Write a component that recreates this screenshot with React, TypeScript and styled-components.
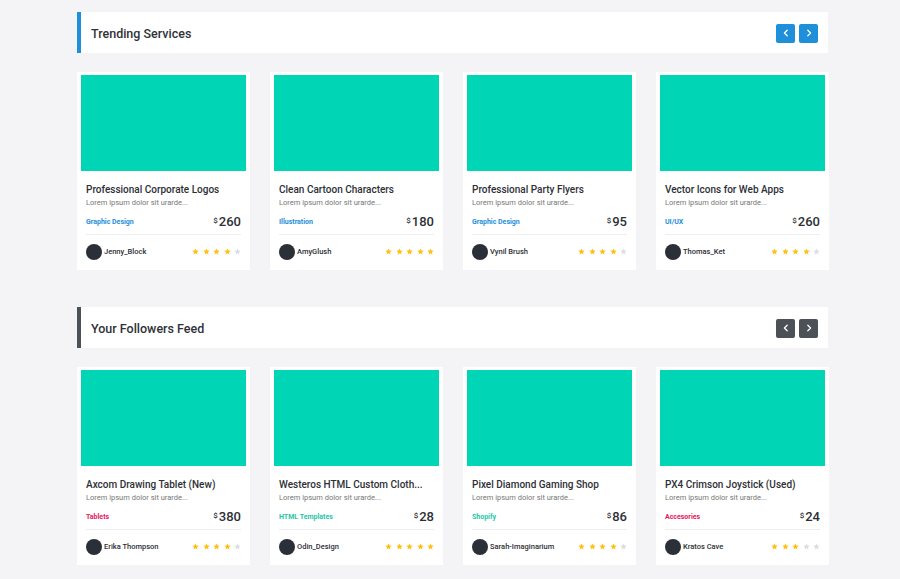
import * as React from "react";
import styled, { createGlobalStyle } from "styled-components";

const GlobalStyle = createGlobalStyle`
  html, body {
    margin: 0;
    padding: 0;
    background: #f4f3f6;
    font-family: Roboto, "Open Sans", "Liberation Sans", sans-serif;
    color: #3e3f5e;
  }
`;

const SPage = styled.div`
  width: 752px;
  margin-left: 77px;
  padding-top: 12px;
  display: flex;
  flex-direction: column;
`;

const SSection = styled.section`
  display: flex;
  flex-direction: column;
  gap: 19px;
  margin-bottom: 37px;
`;

interface IAccent {
  accent: string;
}

const SHeader = styled.div<IAccent>`
  height: 41px;
  background: #fff;
  border-left: 4px solid ${({ accent }) => accent};
  display: flex;
  align-items: center;
  justify-content: space-between;
  padding: 1px 10px 0 10px;
  box-sizing: border-box;
  width: 751px;
`;

const STitle = styled.h2`
  margin: 0;
  font-size: 12.5px;
  font-weight: 500;
  color: #2f3238;
`;

const SControls = styled.div`
  display: flex;
  gap: 4px;
`;

const SArrow = styled.button<IAccent>`
  width: 19px;
  height: 19px;
  border: none;
  border-radius: 2px;
  background: ${({ accent }) => accent};
  color: #fff;
  padding: 0;
  display: flex;
  align-items: center;
  justify-content: center;
  cursor: pointer;
`;

const SGrid = styled.div`
  display: grid;
  grid-template-columns: repeat(4, 173px);
  gap: 20px;
`;

const SCard = styled.div`
  background: #fff;
  padding: 3px 4px 0;
  box-sizing: border-box;
  height: 198px;
  display: flex;
  flex-direction: column;
`;

const SImage = styled.div`
  height: 96px;
  background: #00d5b5;
`;

const SBody = styled.div`
  padding: 13px 5px 0;
  display: flex;
  flex-direction: column;
`;

const SCardTitle = styled.div`
  font-size: 10px;
  font-weight: 500;
  color: #2d2f36;
  white-space: nowrap;
`;

const SDesc = styled.div`
  font-size: 7.5px;
  color: #777;
  margin-top: 3px;
`;

const SMeta = styled.div`
  display: flex;
  justify-content: space-between;
  align-items: center;
  margin-top: 7px;
  padding-bottom: 5px;
  border-bottom: 1px solid #eeeef2;
`;

const SCategory = styled.span<{ color: string }>`
  font-size: 7px;
  font-weight: 700;
  color: ${({ color }) => color};
`;

const SPrice = styled.span`
  font-size: 13px;
  font-weight: 500;
  color: #2d2f36;
  & sup {
    font-size: 8px;
    vertical-align: 3px;
    margin-right: 1px;
  }
`;

const SFooter = styled.div`
  display: flex;
  justify-content: space-between;
  align-items: center;
  height: 33px;
`;

const SUser = styled.div`
  display: flex;
  align-items: center;
  gap: 2px;
  font-size: 7.5px;
  font-weight: 500;
  color: #2d2f36;
`;

const SAvatar = styled.div`
  width: 16px;
  height: 16px;
  border-radius: 50%;
  background: #2b3038;
`;

const SStars = styled.div`
  display: flex;
  gap: 3.5px;
`;

const Star = ({ on }: { on: boolean }) => (
  <svg width="7" height="7" viewBox="0 0 24 24">
    <path
      d="M12 1.5l3.2 7 7.6.8-5.7 5.1 1.6 7.6L12 18.1l-6.7 3.9 1.6-7.6L1.2 9.3l7.6-.8z"
      fill={on ? "#ffc012" : "#dcdce4"}
    />
  </svg>
);

const Chevron = ({ dir }: { dir: "left" | "right" }) => (
  <svg width="8" height="8" viewBox="0 0 10 10">
    <path
      d={dir === "left" ? "M6.5 1.5L3 5l3.5 3.5" : "M3.5 1.5L7 5 3.5 8.5"}
      stroke="#fff"
      strokeWidth="1.6"
      fill="none"
      strokeLinecap="round"
      strokeLinejoin="round"
    />
  </svg>
);

interface IItem {
  title: string;
  category: string;
  catColor: string;
  price: number;
  user: string;
  stars: number;
}

const BLUE = "#1e8fd8";
const TEAL = "#1ec7a6";
const PINK = "#e5165a";

const trending: IItem[] = [
  { title: "Professional Corporate Logos", category: "Graphic Design", catColor: BLUE, price: 260, user: "Jenny_Block", stars: 4 },
  { title: "Clean Cartoon Characters", category: "Illustration", catColor: BLUE, price: 180, user: "AmyGlush", stars: 5 },
  { title: "Professional Party Flyers", category: "Graphic Design", catColor: BLUE, price: 95, user: "Vynil Brush", stars: 4 },
  { title: "Vector Icons for Web Apps", category: "UI/UX", catColor: BLUE, price: 260, user: "Thomas_Ket", stars: 4 },
];

const feed: IItem[] = [
  { title: "Axcom Drawing Tablet (New)", category: "Tablets", catColor: PINK, price: 380, user: "Erika Thompson", stars: 4 },
  { title: "Westeros HTML Custom Cloth...", category: "HTML Templates", catColor: TEAL, price: 28, user: "Odin_Design", stars: 5 },
  { title: "Pixel Diamond Gaming Shop", category: "Shopify", catColor: TEAL, price: 86, user: "Sarah-Imaginarium", stars: 4 },
  { title: "PX4 Crimson Joystick (Used)", category: "Accesories", catColor: PINK, price: 24, user: "Kratos Cave", stars: 3 },
];

const Card = ({ item }: { item: IItem }) => (
  <SCard>
    <SImage />
    <SBody>
      <SCardTitle>{item.title}</SCardTitle>
      <SDesc>Lorem ipsum dolor sit urarde...</SDesc>
      <SMeta>
        <SCategory color={item.catColor}>{item.category}</SCategory>
        <SPrice>
          <sup>$</sup>
          {item.price}
        </SPrice>
      </SMeta>
      <SFooter>
        <SUser>
          <SAvatar />
          {item.user}
        </SUser>
        <SStars>
          {[0, 1, 2, 3, 4].map((i) => (
            <Star key={i} on={i < item.stars} />
          ))}
        </SStars>
      </SFooter>
    </SBody>
  </SCard>
);

const Section = ({ title, accent, items }: { title: string; accent: string; items: IItem[] }) => (
  <SSection>
    <SHeader accent={accent}>
      <STitle>{title}</STitle>
      <SControls>
        <SArrow accent={accent}>
          <Chevron dir="left" />
        </SArrow>
        <SArrow accent={accent}>
          <Chevron dir="right" />
        </SArrow>
      </SControls>
    </SHeader>
    <SGrid>
      {items.map((it) => (
        <Card key={it.title} item={it} />
      ))}
    </SGrid>
  </SSection>
);

const App = () => (
  <>
    <GlobalStyle />
    <SPage>
      <Section title="Trending Services" accent={BLUE} items={trending} />
      <Section title="Your Followers Feed" accent="#4b5156" items={feed} />
    </SPage>
  </>
);

export default App;
